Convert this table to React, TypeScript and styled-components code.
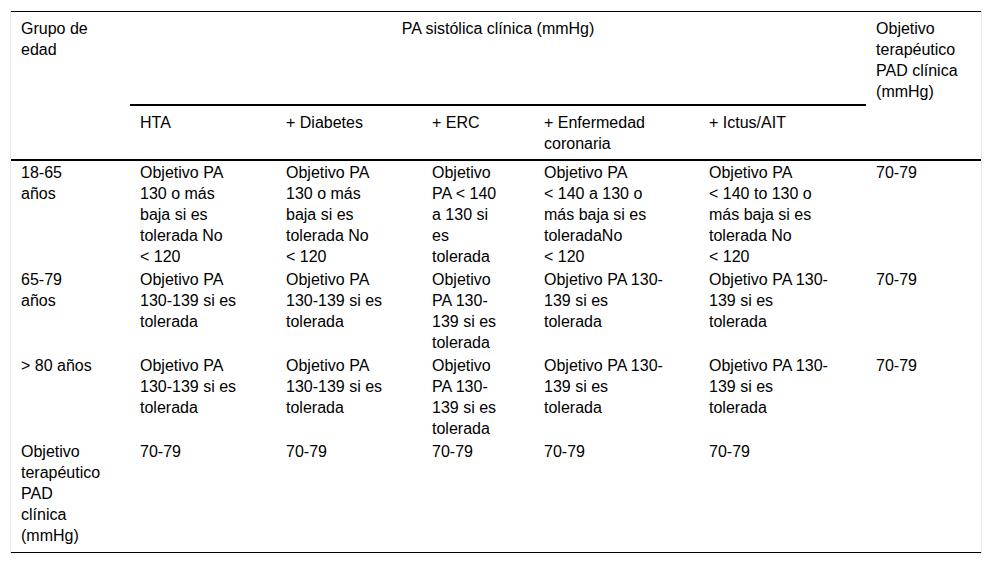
import React from 'react'
import styled, { createGlobalStyle } from 'styled-components'

const GlobalStyle = createGlobalStyle`
  html, body {
    margin: 0;
    padding: 0;
    background: #ffffff;
  }
  body {
    font-family: 'Liberation Sans', Arial, sans-serif;
    color: #000000;
  }
`

const Frame = styled.div`
  margin: 11px 0 0 10px;
  width: 970px;
  border-left: 1px solid #e6e6e6;
  border-right: 1px solid #e6e6e6;
`

const Table = styled.table`
  width: 970px;
  table-layout: fixed;
  border-collapse: separate;
  border-spacing: 0;
  font-family: 'Liberation Sans', Arial, sans-serif;
  font-size: 16px;
  line-height: 21px;
  color: #000;
`

const TopRow = styled.tr`
  height: 95px;
`

const SubRow = styled.tr`
  height: 53px;
`

const HeadCell = styled.th<{ $top?: boolean }>`
  text-align: left;
  vertical-align: top;
  font-weight: normal;
  padding: 6px 4px 5px 10px;
  border-top: ${(p) => (p.$top ? '1px solid #000' : 'none')};
  border-bottom: 2px solid #000;
`

const SpanHeadCell = styled.th`
  text-align: center;
  vertical-align: top;
  font-weight: normal;
  padding: 6px 10px;
  border-top: 1px solid #000;
  border-bottom: 2px solid #000;
`

const BodyCell = styled.td<{ $last?: boolean }>`
  vertical-align: top;
  padding: 1px 4px ${(p) => (p.$last ? 6 : 1)}px 10px;
  border-bottom: ${(p) => (p.$last ? '1px solid #000' : 'none')};
`

const Line = styled.span`
  display: block;
  white-space: nowrap;
`

const widths = [119, 146, 146, 112, 165, 167, 115]

const tolNo = ['Objetivo PA', '130 o más', 'baja si es', 'tolerada No', '<\u00a0120']
const tol = ['Objetivo PA', '130-139 si es', 'tolerada']
const tolNarrow = ['Objetivo', 'PA 130-', '139 si es', 'tolerada']
const tolWide = ['Objetivo PA 130-', '139 si es', 'tolerada']

const rows: string[][][] = [
  [
    ['18-65', 'años'],
    tolNo,
    tolNo,
    ['Objetivo', 'PA <\u00a0140', 'a 130 si', 'es', 'tolerada'],
    ['Objetivo PA', '<\u00a0140 a 130 o', 'más baja si es', 'toleradaNo', '<\u00a0120'],
    ['Objetivo PA', '<\u00a0140 to 130 o', 'más baja si es', 'tolerada No', '<\u00a0120'],
    ['70-79'],
  ],
  [['65-79', 'años'], tol, tol, tolNarrow, tolWide, tolWide, ['70-79']],
  [['>\u00a080 años'], tol, tol, tolNarrow, tolWide, tolWide, ['70-79']],
  [
    ['Objetivo', 'terapéutico', 'PAD', 'clínica', '(mmHg)'],
    ['70-79'],
    ['70-79'],
    ['70-79'],
    ['70-79'],
    ['70-79'],
    [],
  ],
]

const subHeads = [['HTA'], ['+ Diabetes'], ['+ ERC'], ['+ Enfermedad', 'coronaria'], ['+ Ictus/AIT']]

const Lines = ({ lines }: { lines: string[] }) => (
  <>
    {lines.map((l, i) => (
      <Line key={i}>{l}</Line>
    ))}
  </>
)

export default function App() {
  return (
    <>
      <GlobalStyle />
      <Frame>
        <Table>
          <colgroup>
            {widths.map((w, i) => (
              <col key={i} style={{ width: w }} />
            ))}
          </colgroup>
          <thead>
            <TopRow>
              <HeadCell rowSpan={2} $top>
                <Lines lines={['Grupo de', 'edad']} />
              </HeadCell>
              <SpanHeadCell colSpan={5}>PA sistólica clínica (mmHg)</SpanHeadCell>
              <HeadCell rowSpan={2} $top>
                <Lines lines={['Objetivo', 'terapéutico', 'PAD clínica', '(mmHg)']} />
              </HeadCell>
            </TopRow>
            <SubRow>
              {subHeads.map((h, i) => (
                <HeadCell key={i}>
                  <Lines lines={h} />
                </HeadCell>
              ))}
            </SubRow>
          </thead>
          <tbody>
            {rows.map((r, ri) => (
              <tr key={ri}>
                {r.map((cell, ci) => (
                  <BodyCell key={ci} $last={ri === rows.length - 1}>
                    <Lines lines={cell} />
                  </BodyCell>
                ))}
              </tr>
            ))}
          </tbody>
        </Table>
      </Frame>
    </>
  )
}
